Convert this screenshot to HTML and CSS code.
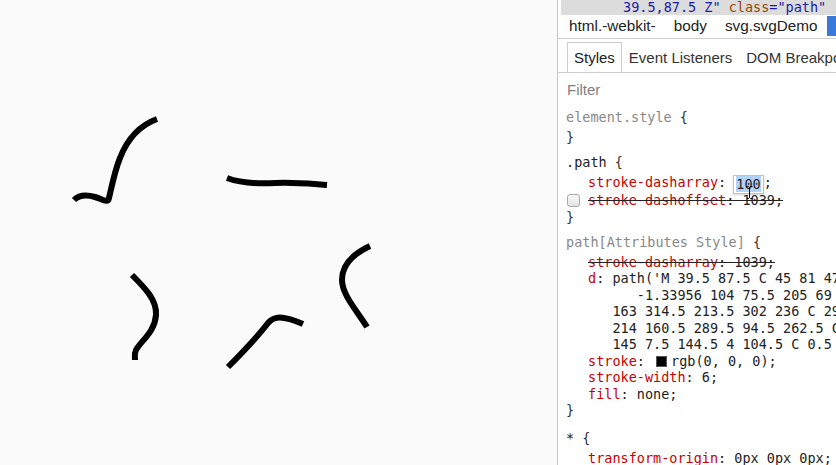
FILE: index.html
```html
<!DOCTYPE html>
<html>
<head>
<meta charset="utf-8">
<link rel="stylesheet" href="styles.css">
</head>
<body>
<div class="page">
  <div class="canvas">
    <svg class="demo" width="557" height="465" viewBox="0 0 557 465">
      <path d="M74 200 C80 194 88 195 95 197 C102 199 108 204 109 198 C112 185 115 170 120 158 C127 140 138 126 157 119"/>
      <path d="M227 178 C240 183 255 184 275 183 C295 182 312 184 327 185"/>
      <path d="M132 275 C145 288 157 300 156 315 C155 332 140 342 136 350 C134 354 135 357 135 360"/>
      <path d="M228 367 C240 355 255 340 268 323 C274 316 282 315 303 324"/>
      <path d="M370 246 C355 253 342 263 342 280 C342 295 358 312 367 327"/>
    </svg>
  </div>
  <div class="devtools">
    <div class="dom-line"><span class="av">39.5,87.5 Z"</span> <span class="an">class</span><span class="av">="path"</span></div>
    <div class="crumbs">
      <span class="crumb">html.-webkit-</span>
      <span class="crumb">body</span>
      <span class="crumb">svg.svgDemo</span>
      <span class="crumb selected">path.path</span>
    </div>
    <div class="tabs">
      <span class="tab active">Styles</span>
      <span class="tab">Event Listeners</span>
      <span class="tab">DOM Breakpoints</span>
      <span class="tab">Properties</span>
    </div>
    <div class="filter">Filter</div>
    <div class="rules">
      <div class="rule first">
        <div class="head"><span class="sel-dim">element.style</span> {</div>
        <div class="close">}</div>
      </div>
      <div class="rule">
        <div class="head"><span class="sel">.path</span> {</div>
        <div class="prop tall"><span class="pn">stroke-dasharray</span>: <span class="edit"><span class="hl">100</span><svg class="ibeam" width="7" height="13" viewBox="0 0 7 13"><path d="M0.5 0.5 H2.5 L3.5 1.5 L4.5 0.5 H6.5 M3.5 1.5 V11.5 M0.5 12.5 H2.5 L3.5 11.5 L4.5 12.5 H6.5"/></svg></span>;</div>
        <div class="prop check"><span class="box"></span><span class="struck"><span class="pn">stroke-dashoffset</span>: 1039;</span></div>
        <div class="close">}</div>
      </div>
      <div class="rule">
        <div class="head"><span class="sel-dim">path[Attributes Style]</span> {</div>
        <div class="prop"><span class="struck"><span class="pn">stroke-dasharray</span>: 1039;</span></div>
        <div class="prop"><span class="pn">d</span>: path('M 39.5 87.5 C 45 81 47.5 85 55.5 87 C 64 89 69 93 72 88</div>
        <div class="prop">      -1.33956 104 75.5 205 69 C 222 72.5 240 70 262 72</div>
        <div class="prop">   163 314.5 213.5 302 236 C 290 250 282 261 276 270</div>
        <div class="prop">   214 160.5 289.5 94.5 262.5 C 90 256 86 248 82 240</div>
        <div class="prop">   145 7.5 144.5 4 104.5 C 0.5 92 12 88 39.5 87.5 Z')</div>
        <div class="prop"><span class="pn">stroke</span>: <span class="swatch"></span>rgb(0, 0, 0);</div>
        <div class="prop"><span class="pn">stroke-width</span>: 6;</div>
        <div class="prop"><span class="pn">fill</span>: none;</div>
        <div class="close">}</div>
      </div>
      <div class="rule last">
        <div class="head"><span class="sel">*</span> {</div>
        <div class="prop"><span class="pn">transform-origin</span>: 0px 0px 0px;</div>
      </div>
    </div>
  </div>
</div>
</body>
</html>
```

FILE: styles.css
```css
* { box-sizing: border-box; }
html, body { margin: 0; padding: 0; }
body {
  width: 836px;
  height: 465px;
  overflow: hidden;
  font-family: "Liberation Sans", Arial, sans-serif;
  background: #fff;
}
.page { display: flex; height: 465px; }
.canvas { flex: 0 0 557px; background: #fafafa; }
.demo { display: block; }
.demo path { fill: none; stroke: #000; stroke-width: 6; stroke-linecap: butt; }

.devtools {
  flex: 1;
  min-width: 0;
  border-left: 1px solid #c8c8c8;
  background: #fff;
  overflow: hidden;
  color: #222;
}
.dom-line {
  height: 15px;
  margin-left: 3px;
  padding-left: 62px;
  background: #dcdcdc;
  font: 13.5px/15px "DejaVu Sans Mono", monospace;
  white-space: pre;
  overflow: hidden;
}
.av { color: #1a1aa6; }
.an { color: #994500; }

.crumbs {
  display: flex;
  height: 24px;
  padding: 1px 0 0 2px;
  border-bottom: 1px solid #cdcdcd;
  white-space: nowrap;
  overflow: hidden;
  font-size: 15.3px;
}
.crumb { flex: none; height: 20px; line-height: 20px; padding: 0 9px; color: #222; }
.crumb.selected { background: #3879d9; color: #fff; }

.tabs {
  display: flex;
  height: 34px;
  padding: 3px 0 0 9px;
  border-bottom: 1px solid #cdcdcd;
  white-space: nowrap;
  overflow: hidden;
  font-size: 15px;
}
.tab {
  flex: none;
  height: 30px;
  line-height: 29px;
  padding: 0 6px;
  border: 1px solid transparent;
  border-bottom: 0;
  color: #333;
}
.tab.active { border-color: #cdcdcd; background: #fff; color: #222; }

.filter {
  height: 28px;
  padding: 6px 0 0 9px;
  line-height: 22px;
  font-size: 15px;
  color: #7f7f7f;
}

.rules {
  font: 13.5px/16.5px "DejaVu Sans Mono", monospace;
  color: #222;
}
.rule { padding: 8.5px 0 0 8px; }
.rule.first { padding-top: 8px; }
.rule.last { padding-top: 11px; }
.head { height: 16.5px; margin-bottom: 3.5px; color: #333; white-space: pre; }
.sel-dim { color: #888; }
.sel { color: #222; }
.close { height: 16.5px; color: #333; }
.prop { height: 16.5px; padding-left: 22px; overflow: hidden; white-space: pre; }
.prop.tall { height: 17.5px; overflow: visible; }
.prop.check { height: 17px; padding-left: 1px; }
.pn { color: #c80000; }
.struck { text-decoration: line-through; text-decoration-color: #222; }

.edit {
  position: relative;
  display: inline-block;
  height: 19px;
  line-height: 17px;
  margin: 0 0 0 -1px;
  padding: 0 2px;
  border: 1px solid #c4c4c4;
  box-shadow: 0 1px 2px rgba(0, 0, 0, 0.18);
  vertical-align: -2px;
  background: #fff;
}
.hl { background: #b2d2f7; }
.ibeam { position: absolute; left: 12px; top: 10px; }
.ibeam path { fill: none; stroke: #000; stroke-width: 1; }

.box {
  display: inline-block;
  width: 13px;
  height: 13px;
  margin-right: 8px;
  vertical-align: -2px;
  border: 1px solid #a9a9a9;
  border-radius: 3px;
  background: linear-gradient(#fafafa, #e2e2e2);
}
.swatch {
  display: inline-block;
  width: 11px;
  height: 11px;
  margin: 0 4px 0 3px;
  vertical-align: -1px;
  background: #000;
  border: 1px solid #555;
}
```
